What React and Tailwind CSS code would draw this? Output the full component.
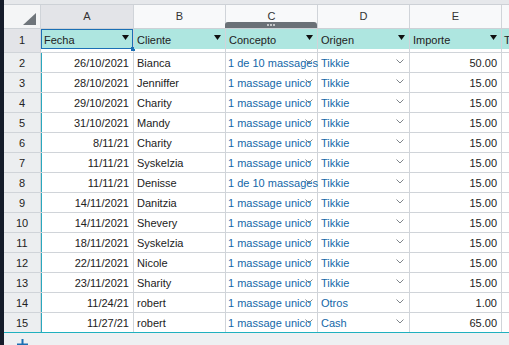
import React from 'react'

const rows = [
  ['26/10/2021', 'Bianca', '1 de 10 massages', 'Tikkie', '50.00'],
  ['28/10/2021', 'Jenniffer', '1 massage unico', 'Tikkie', '15.00'],
  ['29/10/2021', 'Charity', '1 massage unico', 'Tikkie', '15.00'],
  ['31/10/2021', 'Mandy', '1 massage unico', 'Tikkie', '15.00'],
  ['8/11/21', 'Charity', '1 massage unico', 'Tikkie', '15.00'],
  ['11/11/21', 'Syskelzia', '1 massage unico', 'Tikkie', '15.00'],
  ['11/11/21', 'Denisse', '1 de 10 massages', 'Tikkie', '15.00'],
  ['14/11/2021', 'Danitzia', '1 massage unico', 'Tikkie', '15.00'],
  ['14/11/2021', 'Shevery', '1 massage unico', 'Tikkie', '15.00'],
  ['18/11/2021', 'Syskelzia', '1 massage unico', 'Tikkie', '15.00'],
  ['22/11/2021', 'Nicole', '1 massage unico', 'Tikkie', '15.00'],
  ['23/11/2021', 'Sharity', '1 massage unico', 'Tikkie', '15.00'],
  ['11/24/21', 'robert', '1 massage unico', 'Otros', '1.00'],
  ['11/27/21', 'robert', '1 massage unico', 'Cash', '65.00'],
]

const Chevron = ({ className }) => (
  <svg width="8" height="5" viewBox="0 0 8 5" className={className}>
    <polyline points="0.5,0.5 4,4 7.5,0.5" fill="none" stroke="#7f858b" strokeWidth="1" />
  </svg>
)

const Filter = () => (
  <svg width="7" height="5" viewBox="0 0 7 5" className="absolute right-[4px] top-[6px]">
    <polygon points="0,0 7,0 3.5,5" fill="#111" />
  </svg>
)

export default function App() {
  const cell = 'relative h-full border-r border-[#d0d4d9] shrink-0'
  return (
    <div className="flex w-[509px] h-[345px] overflow-hidden bg-[#eef0f2] font-['Liberation_Sans',Arial,sans-serif] text-[11px] text-[#222]">
      <div className="w-[4px] shrink-0 bg-[#151c2a]" />
      <div className="flex-1 flex flex-col overflow-hidden">
        <div className="h-[5px] shrink-0 bg-[#e6e8eb] border-b border-[#cdd1d6]" />

        {/* column letters */}
        <div className="h-[24px] shrink-0 flex border-b border-[#cdd1d6] bg-[#f8f9fa] text-[#333]">
          <div className={cell + ' w-[37px] bg-[#f4f5f6]'}>
            <svg width="13" height="12" viewBox="0 0 13 12" className="absolute left-[19px] top-[8px]">
              <polygon points="13,0 13,12 0,12" fill="#6f757b" />
            </svg>
          </div>
          <div className={cell + ' w-[93px] bg-[#e3e4e8] flex items-center justify-center'}>A</div>
          <div className={cell + ' w-[92px] flex items-center justify-center'}>B</div>
          <div className={cell + ' w-[92px] flex items-center justify-center'}>
            C
            <div className="absolute left-[-1px] right-0 bottom-0 h-[6px] rounded-t-[3px] bg-[#6b7177] flex justify-center gap-[1px] pt-[2px]">
              <span className="w-[2px] h-[2px] bg-white/80 rounded-full" />
              <span className="w-[2px] h-[2px] bg-white/80 rounded-full" />
              <span className="w-[2px] h-[2px] bg-white/80 rounded-full" />
            </div>
          </div>
          <div className={cell + ' w-[92px] flex items-center justify-center'}>D</div>
          <div className={cell + ' w-[92px] flex items-center justify-center'}>E</div>
          <div className="flex-1" />
        </div>

        {/* header row 1 */}
        <div className="h-[24px] shrink-0 flex bg-white border-b border-[#d0d4d9]">
          <div className={cell + ' w-[37px] bg-[#e3e4e8] flex items-center justify-center'}>1</div>
          {['Fecha', 'Cliente', 'Concepto', 'Origen', 'Importe'].map((h, i) => (
            <div key={h} className={cell + (i === 0 ? ' w-[93px]' : ' w-[92px]')}>
              <div className="h-[20px] bg-[#aee6e0] flex items-center pl-[3px] pt-[3px] relative">
                {h}
                <Filter />
                {i === 0 && (
                  <div className="absolute inset-0 border border-[#1b6fb5]">
                    <div className="absolute right-[-3px] bottom-[-3px] w-[4px] h-[4px] bg-[#1b6fb5]" />
                  </div>
                )}
              </div>
            </div>
          ))}
          <div className="flex-1">
            <div className="h-[20px] bg-[#aee6e0] flex items-center pl-[2px] pt-[3px]">T</div>
          </div>
        </div>

        {/* data */}
        {rows.map((r, i) => (
          <div
            key={i}
            className={
              'h-[20px] shrink-0 flex bg-white ' +
              (i === rows.length - 1 ? 'border-b border-[#1fb0bf]' : 'border-b border-[#d0d4d9]')
            }
          >
            <div className={cell + ' w-[37px] bg-[#eceef0] flex items-center justify-center pt-[2px]'}>{i + 2}</div>
            <div className={cell + ' w-[93px] border-l-0 flex items-center justify-end pr-[4px] pt-[2px]'}>
              <div className="absolute left-0 top-0 bottom-0 w-[1px] bg-[#2aa7bd]" />
              {r[0]}
            </div>
            <div className={cell + ' w-[92px] flex items-center pl-[3px] pt-[2px]'}>{r[1]}</div>
            <div className={cell + ' w-[92px] flex items-center pl-[2px] pt-[2px] text-[#1467a8] whitespace-nowrap'}>
              {r[2]}
              <Chevron className="absolute right-[4px] top-[6px]" />
            </div>
            <div className={cell + ' w-[92px] flex items-center pl-[3px] pt-[2px] text-[#1467a8]'}>
              {r[3]}
              <Chevron className="absolute right-[5px] top-[6px]" />
            </div>
            <div className={cell + ' w-[92px] flex items-center justify-end pr-[4px] pt-[2px]'}>{r[4]}</div>
            <div className="flex-1" />
          </div>
        ))}

        <div className="flex-1 pl-[13px] pt-[6px]">
          <svg width="11" height="11" viewBox="0 0 11 11">
            <rect x="0" y="4.5" width="11" height="2" fill="#1a6fb3" />
            <rect x="4.5" y="0" width="2" height="11" fill="#1a6fb3" />
          </svg>
        </div>
      </div>
    </div>
  )
}
